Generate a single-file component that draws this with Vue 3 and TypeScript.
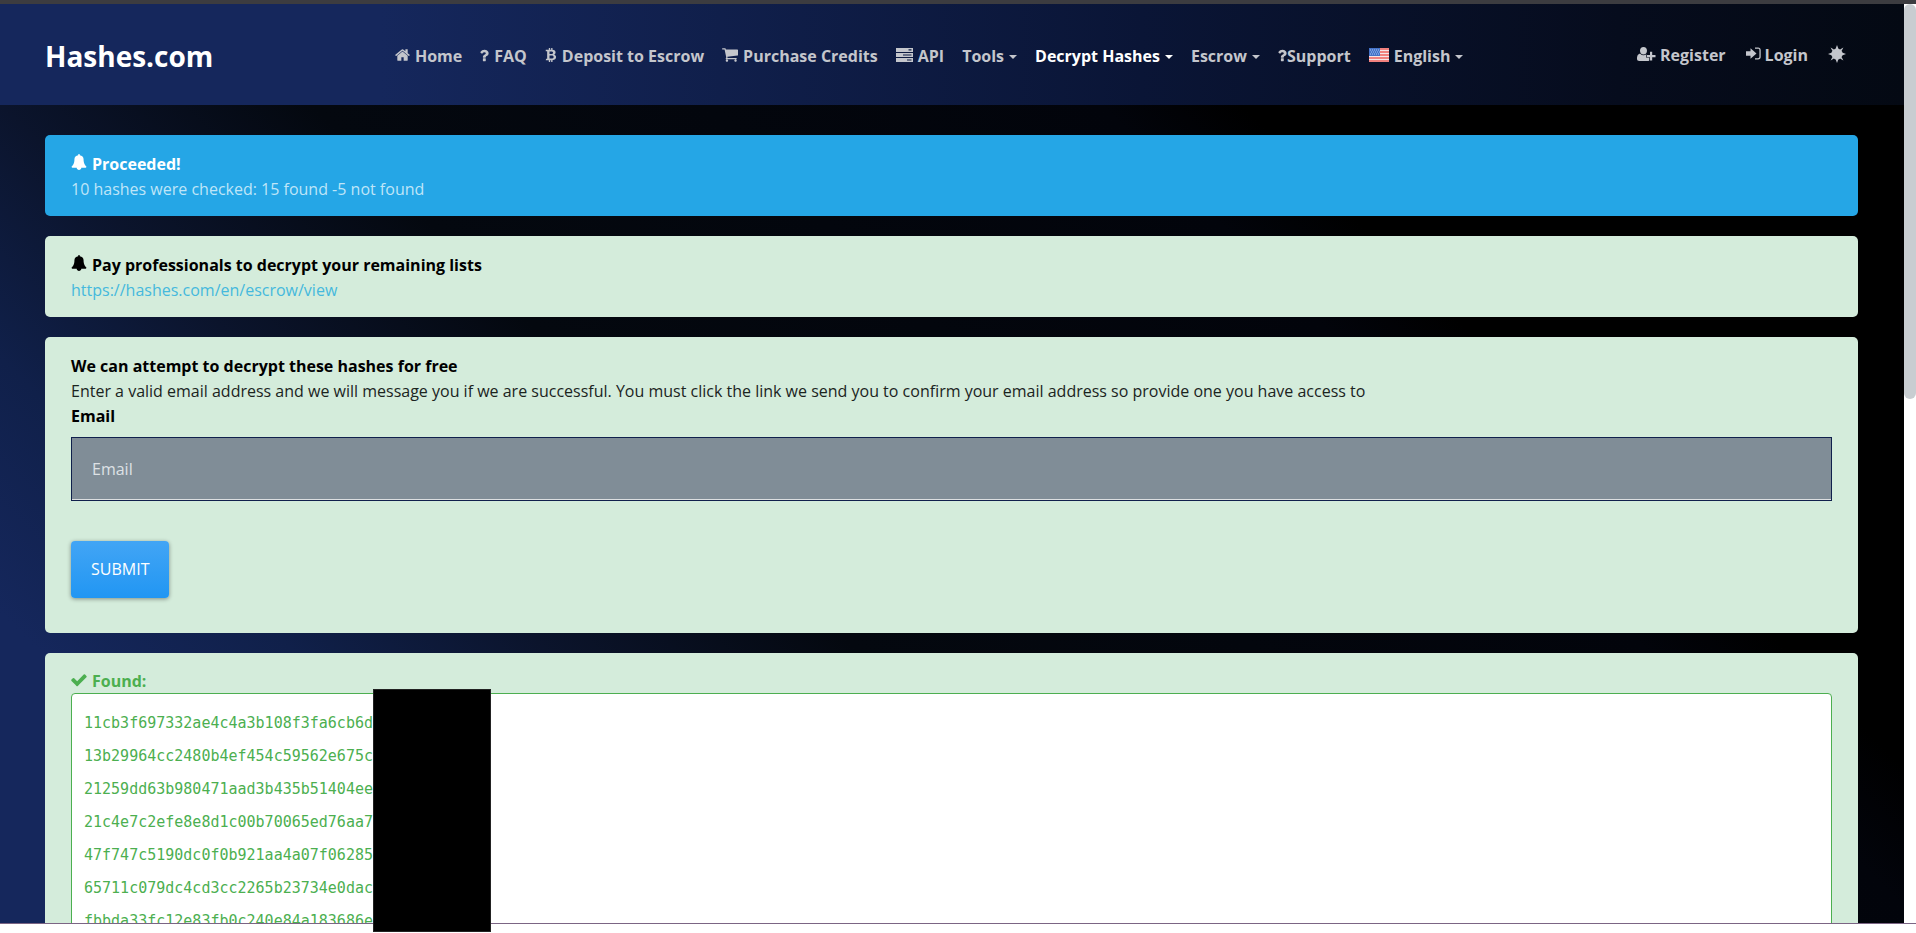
<script setup lang="ts">
import { ref } from 'vue'

interface NavItem {
  label: string
  icon?: string
  caret?: boolean
  active?: boolean
  flag?: boolean
  tight?: boolean
}

const icons: Record<string, { box: string; w: number; d: string }> = {
  home: {
    box: '64 128 1664 1536', w: 15,
    d: 'M1472 992v480q0 26-19 45t-45 19h-384v-384h-256v384h-384q-26 0-45-19t-19-45v-480q0-1 .5-3t.5-3l575-474 575 474q1 2 1 6zm223-69l-62 74q-8 9-21 11h-3q-13 0-21-7l-692-577-692 577q-12 8-24 7-13-2-21-11l-62-74q-8-10-7-23.5t11-21.5l719-599q32-26 76-26t76 26l244 204v-195q0-14 9-23t23-9h192q14 0 23 9t9 23v408l219 182q10 8 11 21.5t-7 23.5z',
  },
  question: {
    box: '448 150 1000 1400', w: 9,
    d: 'M1088 1256v240q0 16-12 28t-28 12h-240q-16 0-28-12t-12-28v-240q0-16 12-28t28-12h240q16 0 28 12t12 28zm316-600q0 54-15.5 101t-35 76.5-55 59.5-57.5 43.5-61 35.5q-41 23-68.5 65t-27.5 67q0 17-12 32.5t-28 15.5h-240q-15 0-25.5-18.5t-10.5-37.5v-45q0-83 65-156.5t143-108.5q59-27 84-56t25-76q0-42-46.5-74t-107.5-32q-65 0-108 29-35 25-107 115-13 16-31 16-12 0-25-8l-164-125q-13-10-15.5-25t5.5-28q160-266 464-266 80 0 161 31t146 83 106 127.5 41 158.5z',
  },
  bitcoin: {
    box: '0 0 12 16', w: 12,
    d: 'M0 2H3.5V0H5V2H6.2V0H7.7V2.1C10 2.4 11.2 3.4 11.2 5.1C11.2 6.3 10.6 7.1 9.6 7.6C11.1 8 11.8 9 11.8 10.4C11.8 12.6 10.3 13.8 7.7 14V16H6.2V14H5V16H3.5V14H0L.4 12.3H1.6V3.8H0ZM4.3 3.9V6.9H6C7.6 6.9 8.4 6.4 8.4 5.4C8.4 4.4 7.6 3.9 6 3.9ZM4.3 8.7V12.1H6.2C8 12.1 9 11.6 9 10.4C9 9.2 8 8.7 6.2 8.7Z',
  },
  cart: {
    box: '64 256 1664 1408', w: 16,
    d: 'M704 1536q0 52-38 90t-90 38-90-38-38-90 38-90 90-38 90 38 38 90zm896 0q0 52-38 90t-90 38-90-38-38-90 38-90 90-38 90 38 38 90zm128-1088v512q0 24-16.5 42.5t-40.5 21.5l-1044 122q13 60 13 70 0 16-24 64h920q26 0 45 19t19 45-19 45-45 19h-1024q-26 0-45-19t-19-45q0-11 8-31.5t16-36 21.5-40 15.5-29.5l-177-823h-204q-26 0-45-19t-19-45 19-45 45-19h256q16 0 28.5 6.5t19.5 15.5 13 24.5 8 26 5.5 29.5 4.5 26h1201q26 0 45 19t19 45z',
  },
  server: {
    box: '0 0 17 14', w: 17,
    d: 'M0 0H17V4H0ZM12.5 1.2V2.4H15.5V1.2ZM0 5H17V9H0ZM7 6.4V7.6H15.5V6.4ZM0 10H17V14H0ZM11 11.4V12.6H15.5V11.4Z',
  },
  userplus: {
    box: '0 0 19 14', w: 19,
    d: 'M6.5 0C8.7 0 10 1.6 10 3.7C10 5.8 8.7 7.4 6.5 7.4C4.3 7.4 3 5.8 3 3.7C3 1.6 4.3 0 6.5 0ZM3.2 6.8C4.2 7.8 5.3 8.3 6.5 8.3C7.7 8.3 8.6 7.9 9.3 7.3V10.7H12.3V13.4C11.9 13.8 11.3 14 10.7 14H2.3C0.9 14 0 13.2 0 11.8C0 9.3 0.7 6.8 3.2 6.8ZM13 4.8H15.2V8H18.5V10.2H15.2V13.5H13V10.2H10V8H13Z',
  },
  signin: {
    box: '0 0 15 14', w: 15,
    d: 'M0 4.3H4.5V1.2L10.5 6.5L4.5 11.8V8.7H0ZM9 .5H12C13.8 .5 14.7 1.5 14.7 3.2V9.8C14.7 11.5 13.8 12.5 12 12.5H9V11.2H12C12.9 11.2 13.4 10.7 13.4 9.8V3.2C13.4 2.3 12.9 1.8 12 1.8H9Z',
  },
  bell: {
    box: '64 0 1664 1792', w: 16,
    d: 'M1728 1408q0 52-38 90t-90 38h-448q0 106-75 181t-181 75-181-75-75-181h-448q-52 0-90-38t-38-90q50-42 91-88t85-119.5 74.5-158.5 50-206 19.5-260q0-152 117-282.5t307-158.5q-8-19-8-39 0-40 28-68t68-28 68 28 28 68q0 20-8 39 190 28 307 158.5t117 282.5q0 139 19.5 260t50 206 74.5 158.5 85 119.5 91 88z',
  },
  check: {
    box: '100 300 1600 1300', w: 16,
    d: 'M1671 566q0 40-28 68l-724 724-136 136q-28 28-68 28t-68-28l-136-136-362-362q-28-28-28-68t28-68l136-136q28-28 68-28t68 28l294 295 656-657q28-28 68-28t68 28l136 136q28 28 28 68z',
  },
}

const nav: NavItem[] = [
  { label: 'Home', icon: 'home' },
  { label: 'FAQ', icon: 'question' },
  { label: 'Deposit to Escrow', icon: 'bitcoin' },
  { label: 'Purchase Credits', icon: 'cart' },
  { label: 'API', icon: 'server' },
  { label: 'Tools', caret: true },
  { label: 'Decrypt Hashes', caret: true, active: true },
  { label: 'Escrow', caret: true },
  { label: 'Support', icon: 'question', tight: true },
  { label: 'English', caret: true, flag: true },
]

const account: NavItem[] = [
  { label: 'Register', icon: 'userplus' },
  { label: 'Login', icon: 'signin' },
]

const email = ref('')
const found = ref(
  [
    '11cb3f697332ae4c4a3b108f3fa6cb6d',
    '13b29964cc2480b4ef454c59562e675c',
    '21259dd63b980471aad3b435b51404ee',
    '21c4e7c2efe8e8d1c00b70065ed76aa7',
    '47f747c5190dc0f0b921aa4a07f06285',
    '65711c079dc4cd3cc2265b23734e0dac',
    'fbbda33fc12e83fb0c240e84a183686e',
  ].join('\n'),
)
</script>

<template>
  <div class="window">
    <div class="strip"></div>
    <div class="viewport">
      <div class="page">
        <header class="header">
          <a class="brand" href="#">Hashes.com</a>
          <nav class="nav">
            <a
              v-for="item in nav"
              :key="item.label"
              href="#"
              class="link"
              :class="{ active: item.active, tight: item.tight }"
            >
              <svg v-if="item.icon" class="icon" :viewBox="icons[item.icon].box" :width="icons[item.icon].w" height="14" aria-hidden="true">
                <path fill-rule="evenodd" :d="icons[item.icon].d" />
              </svg>
              <svg v-if="item.flag" class="icon" viewBox="0 0 20 14" width="20" height="14" aria-hidden="true">
                <rect width="20" height="14" fill="#f6e4e6" />
                <path d="M0 1h20M0 4h20M0 7h20M0 10h20M0 13h20" stroke="#f0605c" stroke-width="1.6" />
                <rect width="11" height="8" fill="#4472c8" />
                <path d="M1 2h10M2 4h9M1 6h10" stroke="#a9c4f2" stroke-dasharray="1 1" />
              </svg>
              <span>{{ item.label }}</span>
              <span v-if="item.caret" class="caret"></span>
            </a>
          </nav>
          <div class="account">
            <a v-for="item in account" :key="item.label" href="#" class="link">
              <svg v-if="item.icon" class="icon" :viewBox="icons[item.icon].box" :width="icons[item.icon].w" height="14" aria-hidden="true">
                <path fill-rule="evenodd" :d="icons[item.icon].d" />
              </svg>
              <span>{{ item.label }}</span>
            </a>
            <button class="theme" type="button" aria-label="Toggle theme">
              <svg viewBox="0 0 18 18" width="18" height="18" aria-hidden="true">
                <circle cx="9" cy="9" r="5.6" />
                <path d="M9 0L10.5 4H7.5ZM9 18L7.5 14H10.5ZM0 9L4 7.5V10.5ZM18 9L14 10.5V7.5ZM2.6 2.6L6 4.4L4.4 6ZM15.4 2.6L13.6 6L12 4.4ZM2.6 15.4L4.4 12L6 13.6ZM15.4 15.4L12 13.6L13.6 12Z" />
              </svg>
            </button>
          </div>
        </header>

        <main class="content">
          <section class="card info">
            <h2 class="title">
              <svg class="icon" :viewBox="icons.bell.box" width="16" height="16" aria-hidden="true"><path :d="icons.bell.d" /></svg>
              Proceeded!
            </h2>
            <p>10 hashes were checked: 15 found -5 not found</p>
          </section>

          <section class="card">
            <h2 class="title">
              <svg class="icon" :viewBox="icons.bell.box" width="16" height="16" aria-hidden="true"><path :d="icons.bell.d" /></svg>
              Pay professionals to decrypt your remaining lists
            </h2>
            <p><a class="url" href="#">https://hashes.com/en/escrow/view</a></p>
          </section>

          <form class="card" @submit.prevent>
            <h2 class="title">We can attempt to decrypt these hashes for free</h2>
            <p>Enter a valid email address and we will message you if we are successful. You must click the link we send you to confirm your email address so provide one you have access to</p>
            <label class="title" for="email">Email</label>
            <input id="email" v-model="email" class="email" type="email" placeholder="Email" />
            <button class="submit" type="submit">SUBMIT</button>
          </form>

          <section class="card">
            <label class="title success" for="found">
              <svg class="icon" :viewBox="icons.check.box" width="16" height="13" aria-hidden="true"><path :d="icons.check.d" /></svg>
              Found:
            </label>
            <textarea id="found" v-model="found" class="found" rows="10" spellcheck="false"></textarea>
          </section>
        </main>
      </div>
      <div class="scrollbar"><div class="thumb"></div></div>
    </div>
    <div class="redaction"></div>
  </div>
</template>

<style>
body {
  margin: 0;
  overflow: hidden;
}
</style>

<style scoped>
* {
  box-sizing: border-box;
}

.window {
  position: relative;
  display: grid;
  grid-template-rows: 4px minmax(0, 1fr) 9px;
  height: 100vh;
  background: #fff;
  font-family: "Open Sans", "Noto Sans", sans-serif;
  font-size: 16px;
  line-height: 25px;
  color: #1b241e;
}

.strip {
  background: #3c3c40;
}

.viewport {
  display: flex;
  overflow: hidden;
  border-bottom: 1px solid #7b6584;
}

.page {
  flex: 1;
  min-width: 0;
  background: linear-gradient(45deg, #15275c 11%, #10204a 20%, #0b142c 29%, #04080f 40%, #02040b 68%, #000 73%);
}

.header {
  display: flex;
  align-items: center;
  justify-content: space-between;
  height: 101px;
  padding: 2px 58px 0 45px;
  background: linear-gradient(90deg, #15275c 0%, #15275c 20%, #0a1536 60%, #060c1d 85%, #040913 100%);
}

.brand {
  font-size: 28px;
  font-weight: 700;
  line-height: 40px;
  color: #fff;
  text-decoration: none;
}

.nav,
.account {
  display: flex;
  align-items: center;
  gap: 20px;
}

.nav {
  gap: 18px;
  padding: 2px 0 0 8px;
}

.link {
  display: flex;
  align-items: baseline;
  gap: 4px;
  font-weight: 700;
  color: #c4c6cc;
  text-decoration: none;
  white-space: nowrap;
}

.nav .link {
  gap: 5px;
}

.nav .link.tight {
  gap: 0;
}

.link.active {
  color: #fff;
}

.icon {
  flex: none;
  fill: currentColor;
}

.caret {
  align-self: center;
  border: 4px solid transparent;
  border-top-color: currentColor;
  border-bottom: 0;
}

.theme {
  display: flex;
  margin-bottom: 4px;
  padding: 0;
  border: 0;
  background: none;
}

.theme svg {
  fill: #c4c6cc;
}

.content {
  display: flex;
  flex-direction: column;
  gap: 20px;
  padding: 30px 46px 0 45px;
}

.card {
  padding: 17px 26px 14px;
  border-radius: 5px;
  background: #d4ecdb;
}

.card.info {
  background: #25a6e6;
  color: #bfe5f8;
}

.title {
  display: flex;
  align-items: baseline;
  gap: 5px;
  margin: 0;
  font-size: 16px;
  font-weight: 700;
  line-height: 25px;
  color: #000;
}

.info .title {
  color: #fff;
}

.title.success {
  line-height: 23px;
  color: #4caf50;
}

p {
  margin: 0;
}

.url {
  color: #45b9dd;
  text-decoration: none;
}

.email {
  display: block;
  width: 100%;
  height: 64px;
  margin: 8px 0 40px;
  padding: 0 20px;
  border: 1px solid #10204c;
  border-radius: 0;
  background: #808d97;
  box-shadow: inset 0 -1px #dcdfe1;
  font: inherit;
  color: #fff;
}

.email::placeholder {
  color: #dde1e5;
  opacity: 1;
}

.submit {
  display: block;
  margin-bottom: 21px;
  height: 57px;
  padding: 0 20px;
  border: 0;
  border-radius: 4px;
  background: linear-gradient(#42a5f5, #2196f3);
  box-shadow: 0 1px 4px rgba(0, 0, 0, 0.4);
  font: inherit;
  color: #fff;
}

.found {
  display: block;
  width: 100%;
  padding: 13px 12px;
  border: 1px solid #4caf50;
  border-radius: 4px;
  background: #fff;
  font-family: "DejaVu Sans Mono", monospace;
  font-size: 15px;
  line-height: 33px;
  color: #4caf50;
  resize: none;
}

.scrollbar {
  width: 12px;
  background: #fff;
}

.thumb {
  height: 43%;
  border-radius: 6px;
  background: #c8cdd1;
}

.redaction {
  position: absolute;
  top: 689px;
  left: 373px;
  width: 118px;
  height: 243px;
  border: 1px solid #222;
  background: #000;
}
</style>
